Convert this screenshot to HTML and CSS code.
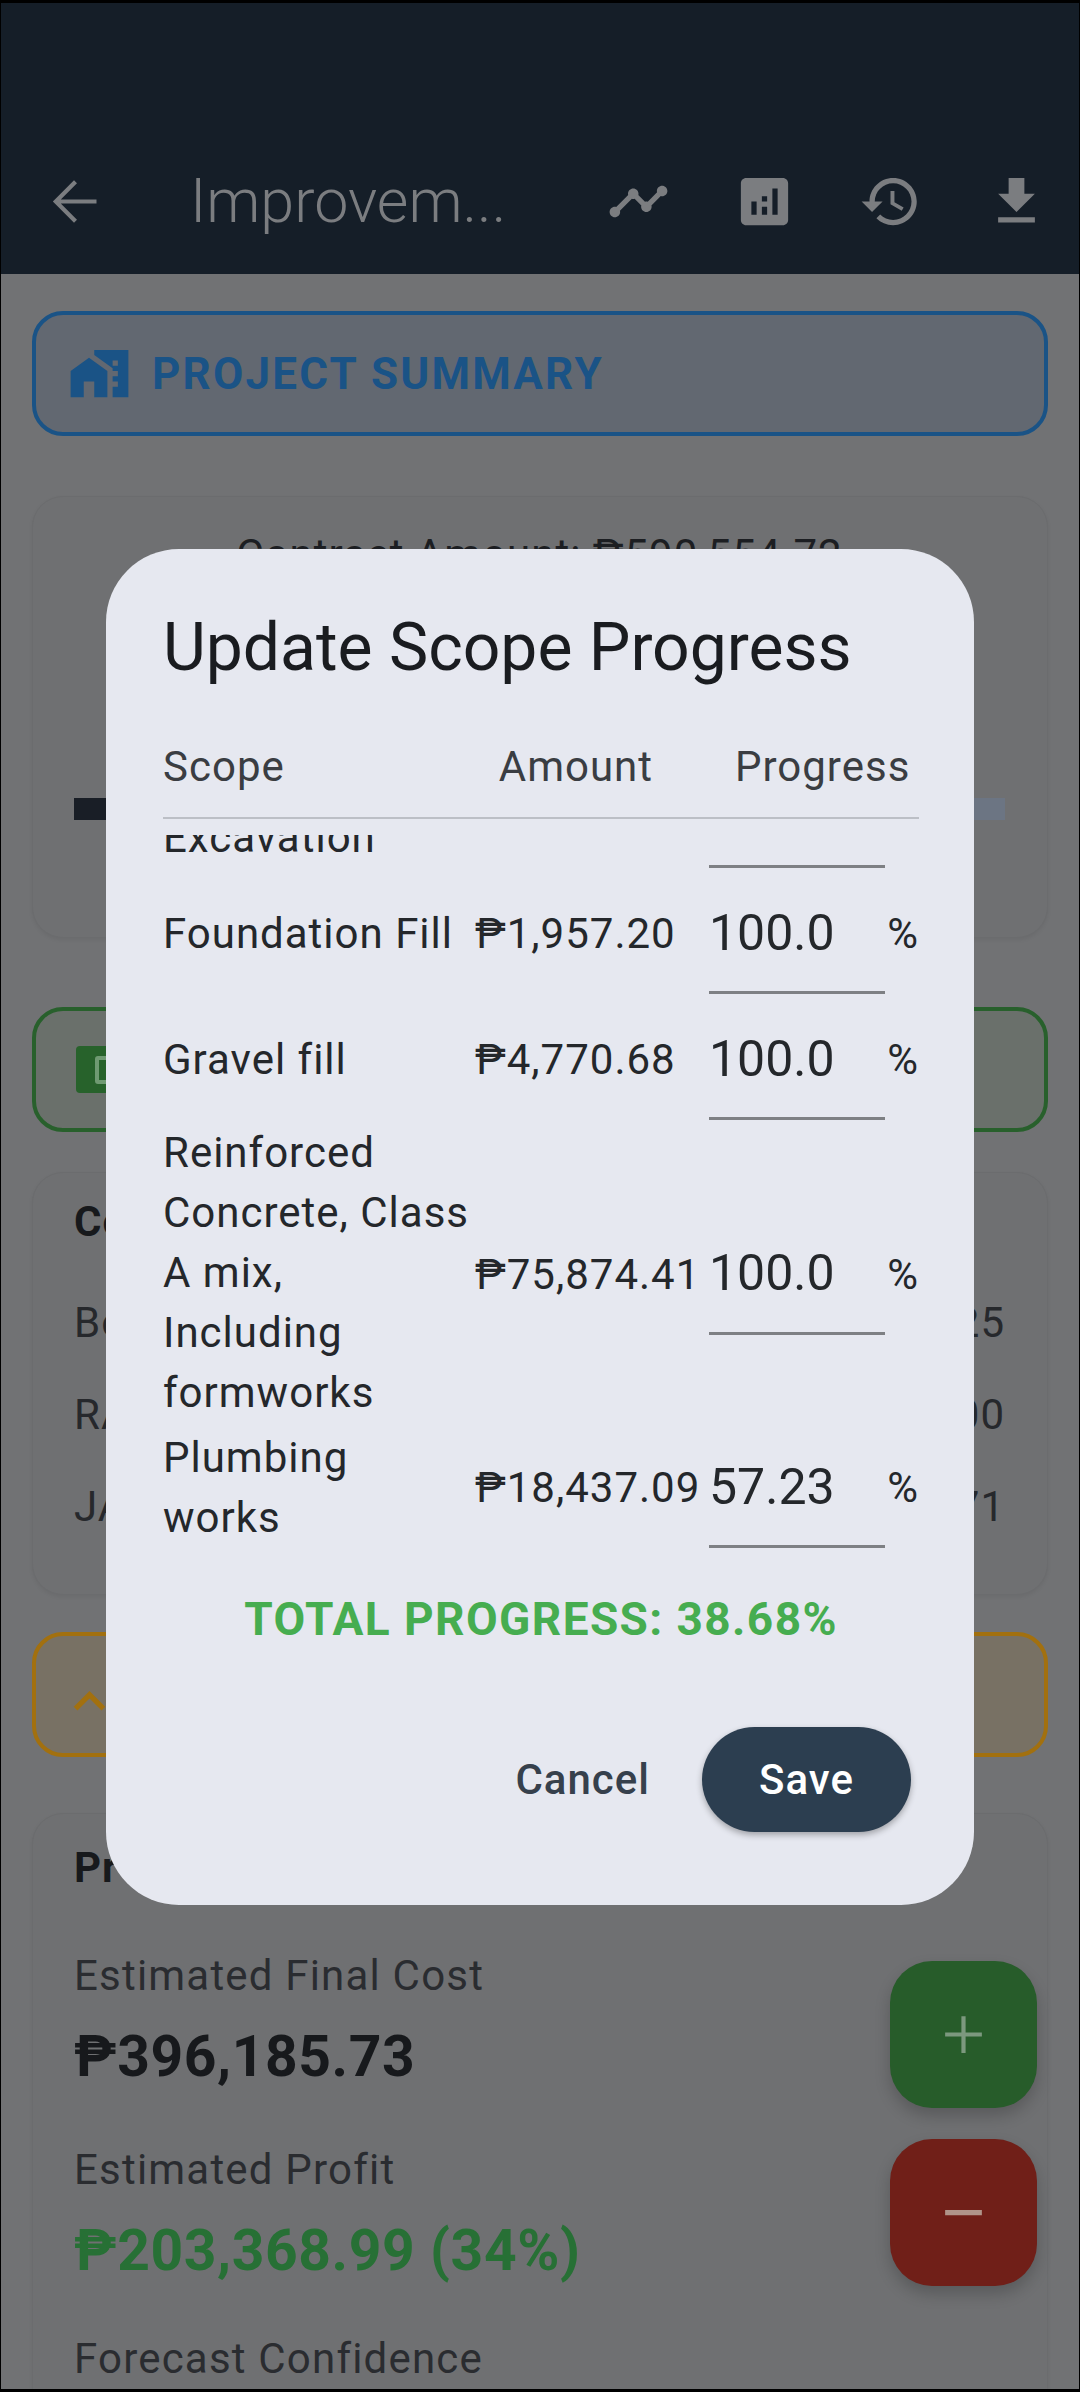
FILE: index.html

```html
<!DOCTYPE html>
<html lang="en">
<head>
  <meta charset="UTF-8" />
  <title>Update Scope Progress</title>
  <meta name="viewport" content="width=device-width, initial-scale=1.0" />
  <link rel="stylesheet" href="styles.css">
</head>
<body>
  <div class="screen">
    <header class="appbar">
      <span class="icon-btn back">
        <svg viewBox="0 0 24 24"><path class="back-line" d="M20 12H5M12 4.5L4.5 12l7.500 7.500"/></svg>
      </span>
      <h1 class="appbar-title">Improvem...</h1>
      <span class="icon-btn">
        <svg viewBox="0 0 24 24"><path d="M23 8c0 1.1-.9 2-2 2-.18 0-.35-.02-.51-.07l-3.56 3.55c.05.16.07.34.07.52 0 1.1-.9 2-2 2s-2-.9-2-2c0-.18.02-.36.07-.52l-2.55-2.55c-.16.05-.34.07-.52.07s-.36-.02-.52-.07l-4.55 4.56c.05.16.07.33.07.51 0 1.1-.9 2-2 2s-2-.9-2-2 .9-2 2-2c.18 0 .35.02.51.07l4.56-4.55C8.02 9.36 8 9.18 8 9c0-1.1.9-2 2-2s2 .9 2 2c0 .18-.02.36-.07.52l2.55 2.55c.16-.05.34-.07.52-.07s.36.02.52.07l3.55-3.56C19.02 8.35 19 8.18 19 8c0-1.1.9-2 2-2s2 .9 2 2z"/></svg>
      </span>
      <span class="icon-btn">
        <svg viewBox="0 0 24 24"><path d="M19 3H5c-1.1 0-2 .9-2 2v14c0 1.1.9 2 2 2h14c1.1 0 2-.9 2-2V5c0-1.1-.9-2-2-2zM9 17H7v-5h2v5zm4 0h-2v-3h2v3zm0-5h-2v-2h2v2zm4 5h-2V7h2v10z"/></svg>
      </span>
      <span class="icon-btn">
        <svg viewBox="0 0 24 24"><path d="M13 3c-4.97 0-9 4.03-9 9H1l3.89 3.89.07.14L9 12H6c0-3.87 3.13-7 7-7s7 3.13 7 7-3.13 7-7 7c-1.93 0-3.68-.79-4.94-2.06l-1.42 1.42C8.27 19.99 10.51 21 13 21c4.97 0 9-4.03 9-9s-4.03-9-9-9zm-1 5v5l4.28 2.54.72-1.21-3.5-2.08V8H12z"/></svg>
      </span>
      <span class="icon-btn">
        <svg viewBox="0 0 24 24"><path d="M19 9h-4V3H9v6H5l7 7 7-7zM5 18v2h14v-2H5z"/></svg>
      </span>
    </header>

    <main class="content">
      <section class="banner banner-blue">
        <svg class="banner-icon" viewBox="0 0 24 24"><path d="M1 11v10h5v-6h4v6h5V11L8 6z"/><path d="M10 3v1.97l7 5V11h2v2h-2v2h2v2h-2v4h6V3H10zm9 6h-2V7h2v2z"/></svg>
        <span class="banner-text">PROJECT SUMMARY</span>
      </section>

      <section class="card card-contract">
        <p class="contract-line">Contract Amount: ₱590,554.72</p>
        <div class="bar"><div class="bar-fill"></div></div>
      </section>

      <section class="banner banner-green">
        <span class="badge"><span class="badge-inner"></span></span>
      </section>

      <section class="card card-workers">
        <div class="card-heading">Co</div>
        <div class="person"><span>Bo</span><span>25</span></div>
        <div class="person"><span>RA</span><span>00</span></div>
        <div class="person"><span>JA</span><span>71</span></div>
      </section>

      <section class="banner banner-orange">
        <svg class="chevron" viewBox="0 0 24 24"><path d="M12 8l-6 6 1.41 1.41L12 10.83l4.59 4.58L18 14z"/></svg>
      </section>

      <section class="card card-forecast">
        <div class="card-heading">Pr</div>
        <div class="stat-label first">Estimated Final Cost</div>
        <div class="stat-value">₱396,185.73</div>
        <div class="stat-label">Estimated Profit</div>
        <div class="stat-value profit">₱203,368.99 (34%)</div>
        <div class="stat-label last">Forecast Confidence</div>
      </section>
    </main>

    <div class="fab fab-add">
      <svg viewBox="0 0 24 24"><path d="M19 12.800h-6.200V19h-1.600v-6.200H5v-1.600h6.200V5h1.600v6.200H19z"/></svg>
    </div>
    <div class="fab fab-remove">
      <svg viewBox="0 0 24 24"><path d="M19 13H5v-2h14v2z"/></svg>
    </div>

    <div class="dialog">
      <h2 class="dialog-title">Update Scope Progress</h2>
      <div class="table-head">
        <span>Scope</span>
        <span class="head-amount">Amount</span>
        <span class="head-progress">Progress</span>
      </div>
      <div class="table-body">
        <div class="row row-cut">
          <span>Excavation</span>
          <span></span>
          <span class="field"></span>
        </div>
        <div class="row">
          <span>Foundation Fill</span>
          <span>₱1,957.20</span>
          <span class="field">100.0</span>
          <span class="pct">%</span>
        </div>
        <div class="row">
          <span>Gravel fill</span>
          <span>₱4,770.68</span>
          <span class="field">100.0</span>
          <span class="pct">%</span>
        </div>
        <div class="row row-tall">
          <span>Reinforced<br>Concrete, Class<br>A mix,<br>Including<br>formworks</span>
          <span>₱75,874.41</span>
          <span class="field">100.0</span>
          <span class="pct">%</span>
        </div>
        <div class="row">
          <span>Plumbing<br>works</span>
          <span>₱18,437.09</span>
          <span class="field">57.23</span>
          <span class="pct">%</span>
        </div>
      </div>
      <div class="total">TOTAL PROGRESS: 38.68%</div>
      <div class="actions">
        <span class="btn-cancel">Cancel</span>
        <span class="btn-save">Save</span>
      </div>
    </div>
  </div>
</body>
</html>
```

FILE: styles.css

```css
* {
  box-sizing: border-box;
}
body {
  margin: 0;
  background: #000;
  font-family: Roboto, "Noto Sans", sans-serif;
}
h1, h2, p {
  margin: 0;
  font-weight: 400;
}
svg {
  display: block;
  fill: currentColor;
}
.screen {
  position: relative;
  width: 1078px;
  height: 2386px;
  margin: 3px 1px;
  overflow: hidden;
  background: #717274;
}

/* app bar */
.appbar {
  display: flex;
  align-items: center;
  height: 271px;
  padding-top: 125px;
  background: #151e28;
  color: #7b7d80;
}
.icon-btn {
  flex: none;
  display: flex;
  align-items: center;
  justify-content: center;
  width: 126px;
  height: 126px;
}
.icon-btn svg {
  width: 63px;
  height: 63px;
}
.back {
  margin-left: 11px;
}
.back-line {
  fill: none;
  stroke: currentColor;
  stroke-width: 1.6;
}
.appbar-title {
  flex: 1;
  margin-left: 52px;
  font-size: 61px;
  font-weight: 300;
  white-space: nowrap;
}

/* page */
.content {
  padding: 37px 31px 0;
}
.banner {
  display: flex;
  align-items: center;
  height: 125px;
  border: 4px solid;
  border-radius: 31px;
  padding-left: 32px;
}
.banner-blue {
  border-color: #1a5386;
  background: #626871;
  color: #1a5386;
}
.banner-icon {
  width: 63px;
  height: 63px;
}
.banner-text {
  margin-left: 21px;
  font-size: 44px;
  font-weight: 700;
  letter-spacing: 2.2px;
}
.banner-green {
  margin-top: 69px;
  border-color: #28602c;
  background: #6a706b;
  padding-left: 40px;
}
.badge {
  display: flex;
  align-items: center;
  width: 60px;
  height: 47px;
  padding-left: 19px;
  border-radius: 4px;
  background: #27622b;
}
.badge-inner {
  width: 30px;
  height: 28px;
  border: 4px solid #6f9a72;
  border-radius: 3px;
}
.banner-orange {
  margin-top: 37px;
  border-color: #a2700f;
  background: #787164;
  color: #a2700f;
  padding-left: 22px;
}
.chevron {
  width: 63px;
  height: 63px;
  margin-top: 14px;
}
.card {
  margin-top: 60px;
  padding: 0 42px 0 41px;
  border: 1px solid #6b6c6e;
  border-radius: 31px;
  background: #6f7072;
  box-shadow: 0 2px 4px rgba(0, 0, 0, 0.06);
  color: #26282c;
  letter-spacing: 1px;
}
.card-contract {
  height: 442px;
  padding-top: 33px;
}
.contract-line {
  font-size: 42px;
  line-height: 50px;
  text-align: center;
  color: #1c1e22;
}
.bar {
  height: 22px;
  margin-top: 218px;
  background: #6c7583;
}
.bar-fill {
  width: 60%;
  height: 100%;
  background: #191e26;
}
.card-workers {
  height: 423px;
  margin-top: 40px;
  padding-top: 24px;
}
.card-heading {
  font-size: 42px;
  line-height: 50px;
  font-weight: 700;
  color: #17191c;
}
.person {
  display: flex;
  justify-content: space-between;
  height: 92px;
  font-size: 42px;
  line-height: 50px;
}
.card-workers .card-heading {
  margin-bottom: 51px;
}
.card-forecast {
  height: 700px;
  margin-top: 56px;
  padding-top: 29px;
}
.stat-label {
  margin-top: 56px;
  font-size: 42px;
  line-height: 50px;
  letter-spacing: 1.2px;
  color: #2a2c30;
}
.stat-label.first {
  margin-top: 58px;
}
.stat-label.last {
  margin-top: 51px;
}
.stat-value {
  margin-top: 24px;
  font-size: 57px;
  line-height: 64px;
  font-weight: 700;
  letter-spacing: 0.6px;
  color: #17191c;
}
.stat-value.profit {
  color: #277035;
}

/* floating buttons */
.fab {
  position: absolute;
  left: 889px;
  display: flex;
  align-items: center;
  justify-content: center;
  width: 147px;
  height: 147px;
  border-radius: 42px;
  box-shadow: 0 8px 16px rgba(0, 0, 0, 0.2);
}
.fab svg {
  width: 63px;
  height: 63px;
}
.fab-add {
  top: 1958px;
  background: #275c2a;
  color: #7c987e;
}
.fab-remove {
  top: 2136px;
  background: #701f18;
  color: #b09489;
}

/* dialog */
.dialog {
  position: absolute;
  left: 105px;
  top: 546px;
  width: 868px;
  height: 1356px;
  padding: 57px 55px 0 57px;
  border-radius: 73px;
  background: #e6e8f0;
  color: #24272b;
}
.dialog-title {
  font-size: 66px;
  line-height: 84px;
  color: #1a1c20;
}
.table-head {
  display: flex;
  height: 78px;
  margin-top: 51px;
  padding: 1px 0 24px;
  border-bottom: 2px solid #bcbfc6;
  font-size: 42px;
  line-height: 50px;
  letter-spacing: 1px;
  color: #3a3d42;
}
.head-amount {
  margin-left: 214px;
}
.head-progress {
  margin-left: 82px;
}
.table-body {
  margin-top: 16px;
}
.row {
  display: grid;
  grid-template-columns: 312px 234px 176px 1fr;
  align-items: center;
  height: 126px;
  font-size: 42px;
  line-height: 60px;
  letter-spacing: 1px;
}
.row > span {
  margin-top: 6px;
}
.row-tall {
  height: 298px;
  margin-bottom: 4px;
}
.row-tall > span:first-child {
  margin-top: 3px;
}
.row-cut {
  grid-template-rows: 33px;
  align-items: end;
  height: 33px;
  overflow: hidden;
}
.row-cut > span {
  margin-top: 0;
}
.row > .field {
  display: flex;
  align-items: center;
  align-self: center;
  height: 126px;
  margin-top: 0;
  padding-top: 6px;
  border-bottom: 3px solid #7e8084;
  font-size: 50px;
  letter-spacing: 0;
}
.row-cut > .field {
  height: 33px;
}
.pct {
  justify-self: end;
}
.total {
  margin-top: 46px;
  font-size: 46px;
  line-height: 50px;
  font-weight: 700;
  letter-spacing: 1.4px;
  text-align: center;
  color: #46ad50;
}
.actions {
  display: flex;
  align-items: center;
  justify-content: flex-end;
  margin-top: 83px;
}
.btn-cancel {
  margin-right: 52px;
  font-size: 42px;
  font-weight: 500;
  letter-spacing: 1px;
  color: #36404c;
}
.btn-save {
  display: flex;
  align-items: center;
  justify-content: center;
  width: 209px;
  height: 105px;
  margin-right: 8px;
  border-radius: 53px;
  background: #2c3e50;
  box-shadow: 0 3px 6px rgba(0, 0, 0, 0.3);
  font-size: 42px;
  font-weight: 500;
  letter-spacing: 1px;
  color: #fff;
}
```
